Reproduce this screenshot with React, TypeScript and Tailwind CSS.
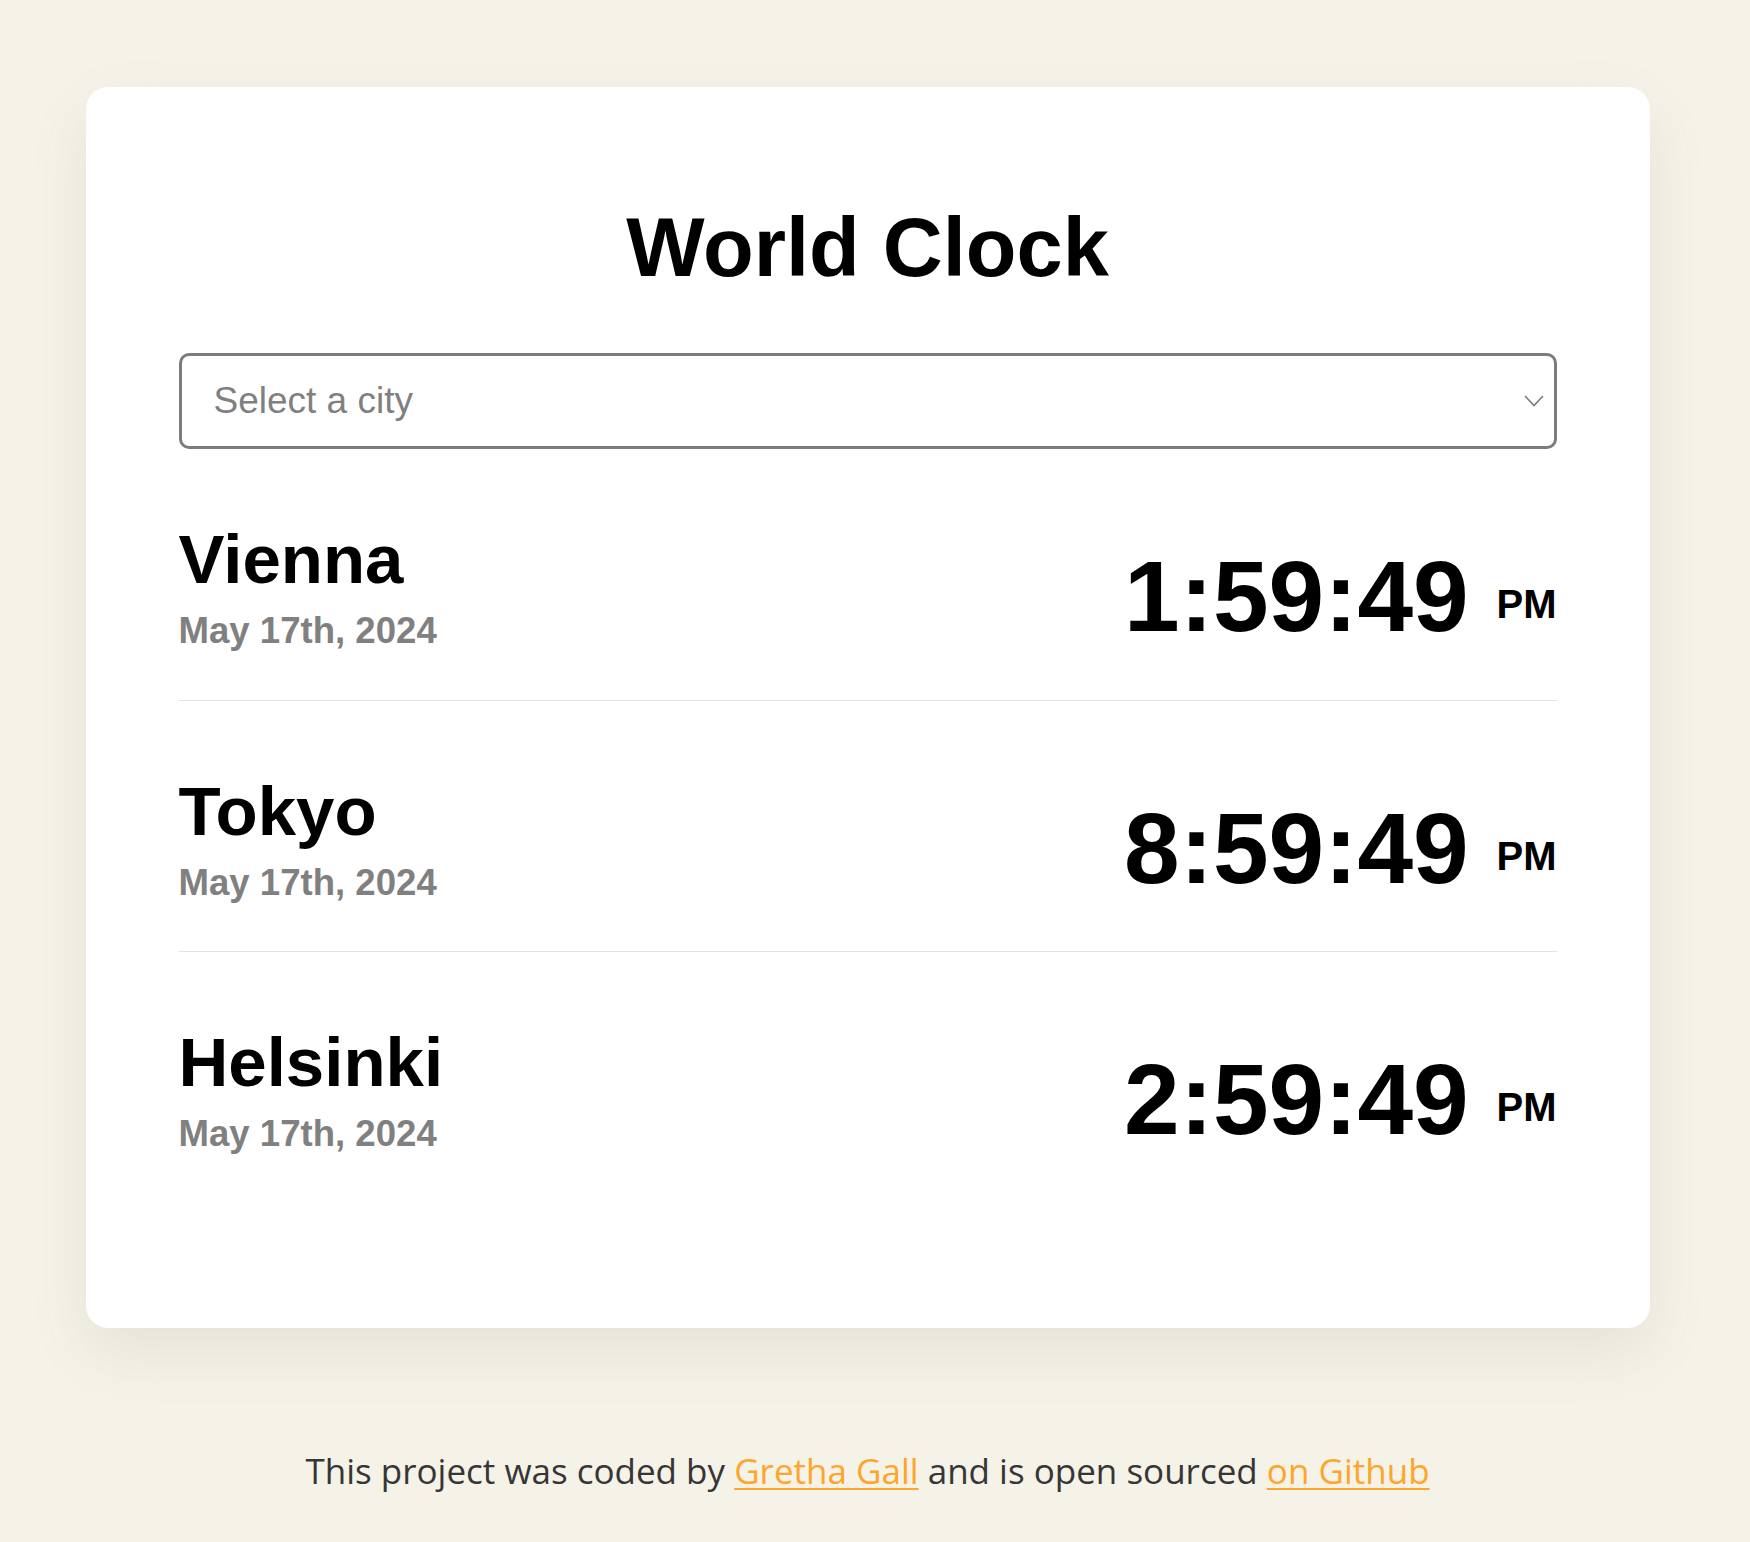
import React from "react";

const cities = [
  { name: "Vienna", date: "May 17th, 2024", time: "1:59:49" },
  { name: "Tokyo", date: "May 17th, 2024", time: "8:59:49" },
  { name: "Helsinki", date: "May 17th, 2024", time: "2:59:49" },
];

export default function App() {
  return (
    <div className="min-h-screen w-full bg-[#f5f2e8]">
      <div className="w-[1735px] pt-[87px] pb-[40px]">
        <div
          className="mx-auto w-[1564px] rounded-[22px] bg-white pt-[119px] px-[93px] pb-[125px] shadow-[0_24px_60px_rgba(110,95,60,0.10)]"
          style={{ fontFamily: '"Liberation Sans", Arial, sans-serif' }}
        >
          <h1 className="text-center text-[83px] font-bold leading-none text-black">World Clock</h1>
          <div className="relative mt-[64px]">
            <select
              defaultValue=""
              className="block h-[96px] w-full appearance-none rounded-[10px] border-[3px] border-[#7c7c7c] bg-white pl-[32px] text-[37px] text-[#808080] outline-none"
              style={{ fontFamily: '"Liberation Sans", Arial, sans-serif' }}
            >
              <option value="" disabled>
                Select a city
              </option>
              <option value="vienna">Vienna</option>
              <option value="tokyo">Tokyo</option>
              <option value="helsinki">Helsinki</option>
            </select>
            <svg
              className="pointer-events-none absolute right-[13px] top-1/2 -translate-y-1/2"
              width="20"
              height="12"
              viewBox="0 0 20 12"
              fill="none"
            >
              <polyline points="1,1 10,10.5 19,1" stroke="#7a7a7a" strokeWidth="1.6" />
            </svg>
          </div>
          {cities.map((c, i) => (
            <div
              key={c.name}
              className={
                i < cities.length - 1
                  ? "flex items-start justify-between border-b border-[#e3e3e3] pt-[76px] pb-[50px]"
                  : "flex items-start justify-between pt-[76px] pb-[50px]"
              }
            >
              <div>
                <div className="text-[69px] font-bold leading-none text-black">{c.name}</div>
                <div className="mt-[19px] text-[36.6px] font-bold leading-none text-[#808080]">{c.date}</div>
              </div>
              <div className="mt-[21px] whitespace-nowrap text-[100px] font-bold leading-none text-black">
                {c.time}{" "}
                <span className="align-[13px] text-[40px]">PM</span>
              </div>
            </div>
          ))}
        </div>
        <p
          className="mt-[125px] text-center text-[35px] leading-none text-[#363636]"
          style={{ fontFamily: '"Open Sans", "Noto Sans", sans-serif' }}
        >
          This project was coded by{" "}
          <a href="#" className="text-[#ffa52c] underline decoration-2 underline-offset-[4px]">
            Gretha Gall
          </a>{" "}
          and is open sourced{" "}
          <a href="#" className="text-[#ffa52c] underline decoration-2 underline-offset-[4px]">
            on Github
          </a>
        </p>
      </div>
    </div>
  );
}
